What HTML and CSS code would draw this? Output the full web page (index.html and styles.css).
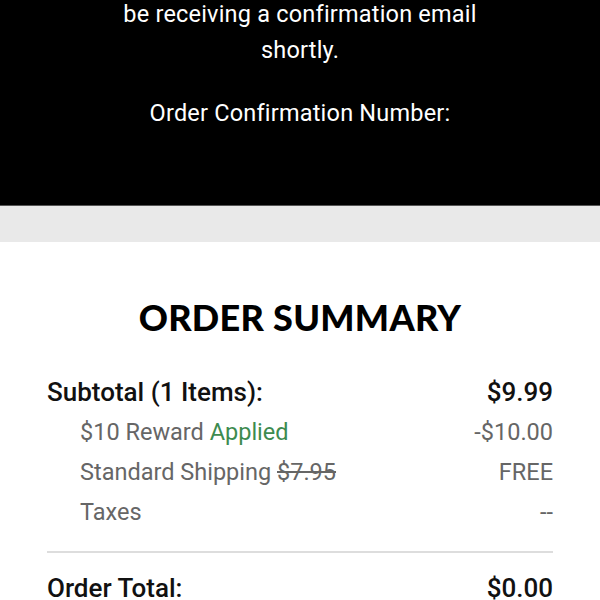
FILE: index.html
```html
<!DOCTYPE html>
<html>
<head>
  <title>Order Confirmation</title>
  <link rel="stylesheet" href="styles.css">
</head>
<body>
  <div class="hero">
    <p class="hero-text first">be receiving a confirmation email<br>shortly.</p>
    <p class="hero-text number">Order Confirmation Number:</p>
  </div>
  <div class="band"></div>

  <div class="summary">
    <h1>ORDER SUMMARY</h1>
    <div class="row main">
      <span>Subtotal (1 Items):</span>
      <span>$9.99</span>
    </div>
    <div class="row sub">
      <span>$10 Reward <span class="green">Applied</span></span>
      <span>-$10.00</span>
    </div>
    <div class="row sub">
      <span>Standard Shipping <s>$7.95</s></span>
      <span>FREE</span>
    </div>
    <div class="row sub">
      <span>Taxes</span>
      <span>--</span>
    </div>
    <hr class="divider">
    <div class="row main total">
      <span>Order Total:</span>
      <span>$0.00</span>
    </div>
  </div>
</body>
</html>
```

FILE: styles.css
```css
body {
  margin: 0;
  font-family: Roboto, "Liberation Sans", sans-serif;
  background-color: #fff;
}

.hero {
  background-color: #000;
  color: #fff;
  height: 206px;
  padding-top: 1px;
  border-bottom: 1px solid #555;
  box-sizing: border-box;
}

.hero-text {
  margin: 0;
  text-align: center;
  font-size: 23.5px;
  line-height: 36px;
  letter-spacing: 0.2px;
}

.hero-text.first {
  margin-top: -5px;
}

.hero-text.number {
  margin-top: 27px;
}

.band {
  height: 36px;
  background-color: #e9e9e9;
}

.summary {
  padding: 0 47px;
}

.summary h1 {
  margin: 52px 0 32px;
  text-align: center;
  font-family: Lato, "DejaVu Sans", sans-serif;
  font-weight: 900;
  font-size: 36px;
  letter-spacing: 0.3px;
  line-height: 46px;
}

.row {
  display: flex;
  justify-content: space-between;
  align-items: center;
}

.row.main {
  font-size: 26px;
  font-weight: 500;
  color: #111;
  height: 40px;
}

.row.sub {
  font-size: 23.5px;
  color: #666;
  height: 40px;
  padding-left: 33px;
}

.green {
  color: #3d8b4f;
}

.divider {
  border: none;
  border-top: 2px solid #ddd;
  margin: 19px 0 15px;
}
```
